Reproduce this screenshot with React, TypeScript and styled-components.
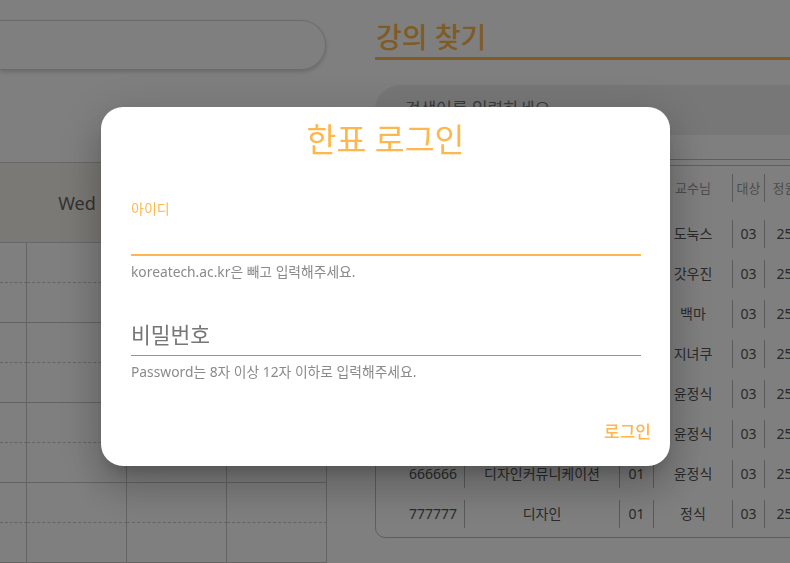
import React from "react";
import styled, { createGlobalStyle } from "styled-components";

const ORANGE = "#ffb74d";
const FONT = `"Noto Sans", "Noto Sans CJK KR", sans-serif`;

const GlobalStyle = createGlobalStyle`
  html, body {
    margin: 0;
    padding: 0;
    background: #ffffff;
    font-family: ${FONT};
    overflow: hidden;
  }
  * {
    box-sizing: border-box;
  }
`;

type Lecture = {
  code: string;
  name: string;
  cls: string;
  prof: string;
  target: string;
  cap: string;
};

const lectures: Lecture[] = [
  { code: "000000", name: "컴퓨터구조", cls: "01", prof: "도눅스", target: "03", cap: "25" },
  { code: "111111", name: "자료구조", cls: "01", prof: "갓우진", target: "03", cap: "25" },
  { code: "222222", name: "운영체제", cls: "01", prof: "백마", target: "03", cap: "25" },
  { code: "333333", name: "알고리즘", cls: "01", prof: "지녀쿠", target: "03", cap: "25" },
  { code: "444444", name: "디자인씽킹", cls: "01", prof: "윤정식", target: "03", cap: "25" },
  { code: "555555", name: "디자인기초", cls: "01", prof: "윤정식", target: "03", cap: "25" },
  { code: "666666", name: "디자인커뮤니케이션", cls: "01", prof: "윤정식", target: "03", cap: "25" },
  { code: "777777", name: "디자인", cls: "01", prof: "정식", target: "03", cap: "25" },
];

const days = ["Wed", "Thu", "Fri"];
const slotRows = Array.from({ length: 8 }, (_, i) => i);

const App = () => {
  return (
    <>
      <GlobalStyle />
      <Page>
        <LeftPanel>
          <SearchBar />
          <Timetable>
            <HeadCell />
            {days.map((d) => (
              <HeadCell key={d}>{d}</HeadCell>
            ))}
            {slotRows.map((r) =>
              [0, 1, 2, 3].map((c) => <SlotCell key={`${r}-${c}`} dashed={r % 2 === 0} />)
            )}
          </Timetable>
        </LeftPanel>

        <RightPanel>
          <Heading>강의 찾기</Heading>
          <SearchBox>검색어를 입력하세요</SearchBox>
          <TableBox>
            <HeaderRow>
              <Cell align="right">학수번호</Cell>
              <Cell divider>과목명</Cell>
              <Cell divider>분반</Cell>
              <Cell divider>교수님</Cell>
              <Cell divider>대상</Cell>
              <Cell divider>정원</Cell>
            </HeaderRow>
            <Body>
              {lectures.map((l) => (
                <BodyRow key={l.code}>
                  <Cell align="right">{l.code}</Cell>
                  <Cell divider>{l.name}</Cell>
                  <Cell divider>{l.cls}</Cell>
                  <Cell divider>{l.prof}</Cell>
                  <Cell divider>{l.target}</Cell>
                  <Cell divider>{l.cap}</Cell>
                </BodyRow>
              ))}
            </Body>
          </TableBox>
        </RightPanel>
      </Page>

      <Backdrop>
        <Dialog>
          <Title>한표 로그인</Title>
          <Field>
            <ShrunkLabel>아이디</ShrunkLabel>
            <InputArea focused />
            <Helper>koreatech.ac.kr은 빼고 입력해주세요.</Helper>
          </Field>
          <Field gap={38}>
            <InputArea>
              <Placeholder>비밀번호</Placeholder>
            </InputArea>
            <Helper>Password는 8자 이상 12자 이하로 입력해주세요.</Helper>
          </Field>
          <Actions>
            <TextButton>로그인</TextButton>
          </Actions>
        </Dialog>
      </Backdrop>
    </>
  );
};

const Page = styled.div`
  display: flex;
  gap: 48px;
  width: 100vw;
  height: 100vh;
  overflow: hidden;
`;

const LeftPanel = styled.div`
  flex: 0 0 327px;
  display: flex;
  flex-direction: column;
`;

const SearchBar = styled.div`
  margin-top: 20px;
  height: 51px;
  width: 326px;
  border: 1px solid #d6d6d6;
  border-left: none;
  border-radius: 0 26px 26px 0;
  box-shadow: 0 2px 4px rgba(0, 0, 0, 0.18);
`;

const Timetable = styled.div`
  margin-top: 92px;
  display: grid;
  grid-template-columns: 27px 100px 100px 100px;
  grid-template-rows: 80px;
  grid-auto-rows: 40px;
  border-top: 1px solid #cfcfcf;
`;

const HeadCell = styled.div`
  background: #f6f2ea;
  border-bottom: 1px solid #cfcfcf;
  display: flex;
  align-items: center;
  justify-content: center;
  font-size: 18px;
  color: #666;
`;

const SlotCell = styled.div<{ dashed: boolean }>`
  border-right: 1px solid #c8c8c8;
  border-bottom: 1px ${({ dashed }) => (dashed ? "dashed" : "solid")} #c8c8c8;
`;

const RightPanel = styled.div`
  flex: 0 0 480px;
  display: flex;
  flex-direction: column;
`;

const Heading = styled.h2`
  margin: 18px 0 0;
  font-size: 28px;
  font-weight: 500;
  line-height: 39px;
  color: ${ORANGE};
  border-bottom: 3px solid ${ORANGE};
  padding-left: 1px;
`;

const SearchBox = styled.div`
  margin-top: 25px;
  height: 50px;
  border-radius: 25px;
  background: #eeeeee;
  padding: 10px 30px 0;
  font-size: 17px;
  color: #777;
`;

const TableBox = styled.div`
  margin-top: 24px;
  border: 1px solid #bdbdbd;
  border-radius: 10px;
  padding: 5px 0 3px;
`;

const columns = "88px 155px 34px 79px 32px 40px 1fr";

const HeaderRow = styled.div`
  display: grid;
  grid-template-columns: ${columns};
  align-items: center;
  height: 45px;
  border-top: 1px solid #bdbdbd;
  font-size: 13px;
  color: #999;
`;

const Body = styled.div`
  padding-top: 4px;
`;

const BodyRow = styled.div`
  display: grid;
  grid-template-columns: ${columns};
  align-items: center;
  height: 40px;
  font-size: 14px;
  color: #555;
`;

const Cell = styled.div<{ align?: "right" | "center"; divider?: boolean }>`
  height: 28px;
  line-height: 28px;
  text-align: ${({ align }) => align ?? "center"};
  padding-right: ${({ align }) => (align === "right" ? "7px" : "0")};
  border-left: ${({ divider }) => (divider ? "1px solid #b5b5b5" : "none")};
  white-space: nowrap;
  overflow: hidden;
`;

const Backdrop = styled.div`
  position: fixed;
  inset: 0;
  background: rgba(0, 0, 0, 0.5);
  display: flex;
  align-items: flex-start;
  padding: 107px 0 0 101px;
`;

const Dialog = styled.div`
  width: 569px;
  background: #fff;
  border-radius: 22px;
  padding: 9px 11px 16px 30px;
  box-shadow: 0 11px 15px -7px rgba(0, 0, 0, 0.2), 0 24px 38px 3px rgba(0, 0, 0, 0.14),
    0 9px 46px 8px rgba(0, 0, 0, 0.12);
  display: flex;
  flex-direction: column;
`;

const Title = styled.h1`
  margin: 0 0 0 -19px;
  text-align: center;
  font-size: 32.5px;
  font-weight: 400;
  line-height: 48px;
  color: ${ORANGE};
`;

const Field = styled.div<{ gap?: number }>`
  width: 510px;
  margin-top: ${({ gap }) => gap ?? 35}px;
  display: flex;
  flex-direction: column;
`;

const ShrunkLabel = styled.label`
  font-size: 14px;
  line-height: 20px;
  color: ${ORANGE};
`;

const InputArea = styled.div<{ focused?: boolean }>`
  min-height: ${({ focused }) => (focused ? "36.5px" : "0")};
  padding-bottom: ${({ focused }) => (focused ? "0" : "5px")};
  border-bottom: ${({ focused }) => (focused ? `2px solid ${ORANGE}` : "1px solid #949494")};
`;

const Placeholder = styled.span`
  display: block;
  font-size: 21.5px;
  line-height: 30px;
  color: #777;
`;

const Helper = styled.p`
  margin: 6px 0 0;
  font-size: 13.8px;
  line-height: 20px;
  color: #8a8a8a;
`;

const Actions = styled.div`
  margin-top: 32px;
  display: flex;
  justify-content: flex-end;
`;

const TextButton = styled.button`
  border: none;
  background: transparent;
  padding: 6px 8px;
  font-family: ${FONT};
  font-size: 17px;
  font-weight: 500;
  line-height: 24px;
  color: ${ORANGE};
  cursor: pointer;
`;

export default App;
